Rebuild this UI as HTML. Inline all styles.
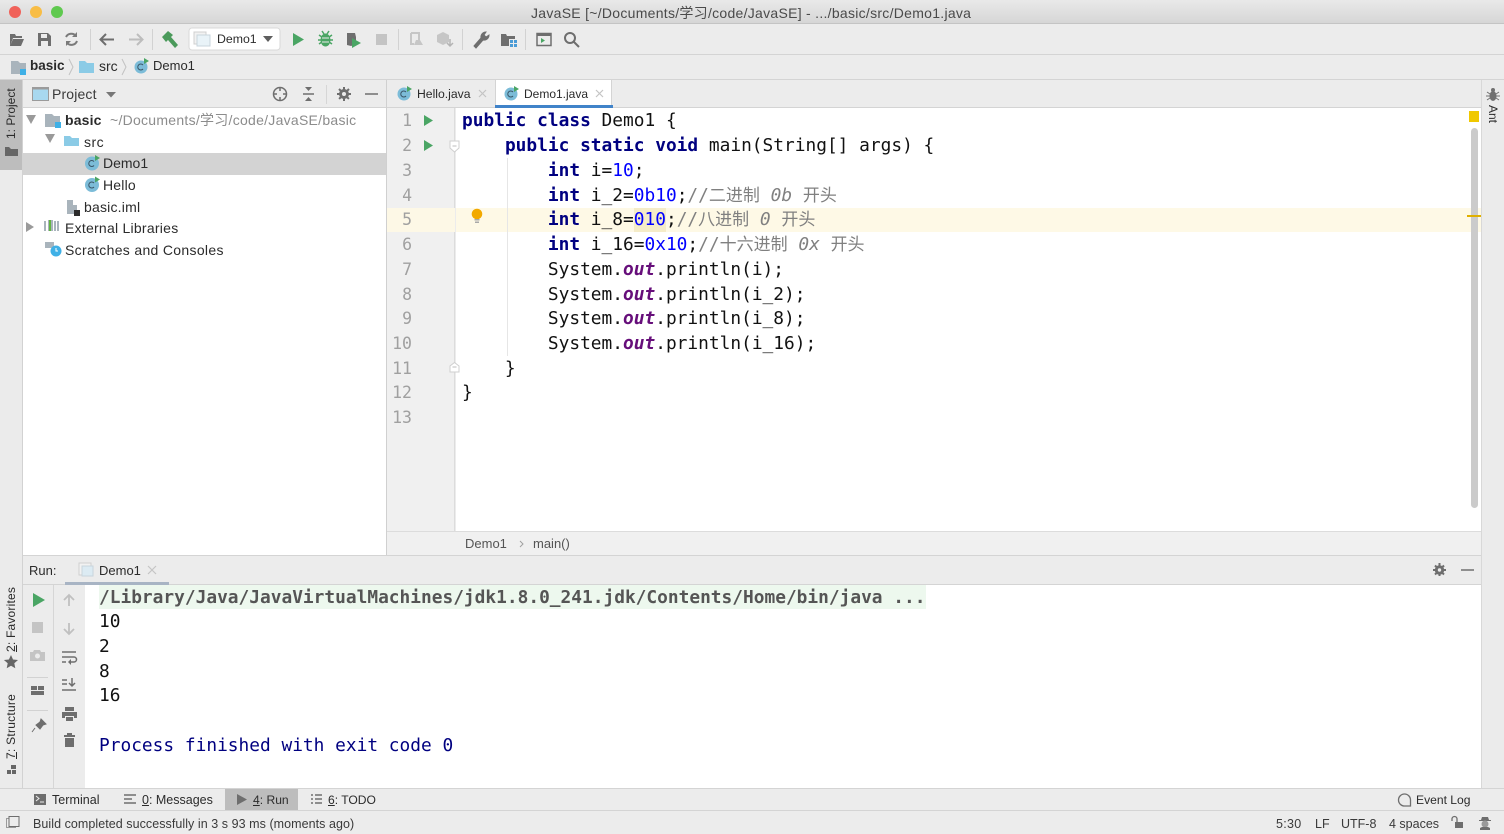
<!DOCTYPE html>
<html><head><meta charset="utf-8"><style>
html,body{margin:0;padding:0;width:1504px;height:834px;overflow:hidden;background:#ececec}
body{position:relative;font-family:"Liberation Sans","Noto Sans CJK SC",sans-serif;font-size:13px;color:#2b2b2b}
.a{position:absolute}
.t{position:absolute;white-space:nowrap;line-height:16px}
.m{position:absolute;white-space:pre;font-family:"DejaVu Sans Mono","Noto Sans CJK SC",monospace;font-size:17.83px;line-height:24px;color:#111}
.k{color:#000080;font-weight:bold}.n{color:#0000ff}.c{color:#808080}.z{font-size:17px}.ci{color:#808080;font-style:italic}.o{color:#660e7a;font-weight:bold;font-style:italic}
.ln{position:absolute;left:386px;width:26px;text-align:right;font-family:"DejaVu Sans Mono",monospace;font-size:16.5px;line-height:24px;color:#a0a0a0}
svg{position:absolute;overflow:visible}
u{text-decoration:underline}
</style></head><body>
<!-- title bar -->
<div class="a" style="left:0;top:0;width:1504px;height:24px;background:linear-gradient(#e9e9e9,#d6d6d6);border-bottom:1px solid #c4c4c4;box-sizing:border-box"></div>
<div class="a" style="left:9px;top:6px;width:12px;height:12px;border-radius:50%;background:#f0625a"></div>
<div class="a" style="left:30px;top:6px;width:12px;height:12px;border-radius:50%;background:#f8bd45"></div>
<div class="a" style="left:51px;top:6px;width:12px;height:12px;border-radius:50%;background:#5fc94f"></div>
<div class="t" style="left:531px;top:4.500px;font-size:14px;letter-spacing:.28px;color:#4a4a4a">JavaSE [~/Documents/学习/code/JavaSE] - .../basic/src/Demo1.java</div>
<!-- toolbar -->
<div class="a" style="left:0;top:24px;width:1504px;height:31px;background:#ececec;border-bottom:1px solid #d4d4d4;box-sizing:border-box"></div>
<svg style="left:0;top:24px" width="600" height="31">
<path d="M10 10h5l1 2h6v2H13l-3 8zM13 15h11l-3 7H10z" fill="#6e6e6e"/>
<path d="M38 9h10l3 3v10H38z" fill="#6e6e6e"/><rect x="41" y="10" width="6" height="4" fill="#ececec"/><rect x="41" y="17" width="7" height="5" fill="#ececec"/>
<path d="M76 12a6 6 0 0 0-10 1M67 19a6 6 0 0 0 10-2" fill="none" stroke="#7a7a7a" stroke-width="2"/><path d="M77 8v5h-5zM66 22v-5h5z" fill="#7a7a7a"/>
<rect x="90" y="5" width="1" height="21" fill="#d2d2d2"/>
<path d="M114 15.500H101M106 10l-5.500 5.500L106 21" fill="none" stroke="#6e6e6e" stroke-width="2"/>
<path d="M129 15.500h13M137 10l5.500 5.500L137 21" fill="none" stroke="#bdbdbd" stroke-width="2"/>
<rect x="152" y="5" width="1" height="21" fill="#d2d2d2"/>
<path d="M162 13l6-6 5 4-2 2 7 8-3 3-7-8-2 2z" fill="#4b9a5b"/>
<rect x="189" y="4" width="91" height="22" rx="3" fill="#fff" stroke="#d9d9d9"/>
<rect x="194" y="8" width="12" height="12" fill="#f2f2f2" stroke="#d0d0d0"/><rect x="197" y="11" width="13" height="11" fill="#e9f3f8" stroke="#c9d5dc"/>
<path d="M263 12h10l-5 6z" fill="#5e5e5e"/>
<path d="M293 9l11 6.500-11 6.500z" fill="#4aa564"/>
<ellipse cx="325.500" cy="16" rx="5" ry="6.500" fill="#4aa564"/><path d="M319 11l13 9M332 11l-13 9M318 16h15M322 7l2 3M329 7l-2 3" stroke="#4aa564" stroke-width="1.500"/><path d="M322 14h7M322 18h7" stroke="#ececec"/>
<path d="M347 9h8l1 4v3l-2 5-3 1-4-1z" fill="#6e6e6e"/><path d="M352 14l9 5-9 5z" fill="#4aa564"/>
<rect x="376" y="10" width="11" height="11" fill="#c4c4c4"/>
<rect x="398" y="5" width="1" height="21" fill="#d2d2d2"/>
<path d="M411 9h8v6h-1M411 9v11h3" fill="none" stroke="#c6c6c6" stroke-width="2"/><path d="M416 16l4 0 3 5h-9z" fill="#c6c6c6"/>
<path d="M437 11l6-3 6 3v7l-6 3-6-3z" fill="#c6c6c6"/><path d="M450 15v6M447 19l3 3 3-3" stroke="#b4b4b4" stroke-width="1.500" fill="none"/>
<rect x="462" y="5" width="1" height="21" fill="#d2d2d2"/>
<path d="M474 22l7-8a5 5 0 0 1 5-6l-2 3 2 2 3-2a5 5 0 0 1-6 5l-7 8z" fill="#6e6e6e" stroke="#6e6e6e"/>
<path d="M501 10h5l1 2h8v3h-6v7h-8z" fill="#6e6e6e"/><rect x="510" y="16" width="3" height="3" fill="#4a9bd6"/><rect x="514" y="16" width="3" height="3" fill="#4a9bd6"/><rect x="510" y="20" width="3" height="3" fill="#4a9bd6"/><rect x="514" y="20" width="3" height="3" fill="#4a9bd6"/>
<rect x="525" y="5" width="1" height="21" fill="#d2d2d2"/>
<rect x="537" y="9.500" width="14" height="12" fill="none" stroke="#6e6e6e" stroke-width="1.500"/><rect x="537" y="9" width="14" height="3" fill="#6e6e6e"/><path d="M541 14l4 2.500-4 2.500z" fill="#4aa564"/>
<circle cx="570" cy="14" r="5" fill="none" stroke="#6e6e6e" stroke-width="2"/><path d="M574 18l5 5" stroke="#6e6e6e" stroke-width="2"/>
</svg>
<div class="t" style="left:217px;top:31px;font-size:12.300px">Demo1</div>
<!-- nav bar -->
<div class="a" style="left:0;top:55px;width:1504px;height:25px;background:#ececec;border-bottom:1px solid #d4d4d4;box-sizing:border-box"></div>
<svg style="left:0;top:55px" width="200" height="25">
<path d="M11 6h7l2 2h6v11H11z" fill="#a9b4bc"/><rect x="20" y="14" width="6" height="6" fill="#3fb0e6"/>
<path d="M69 4l4 8-4 8M122 4l4 8-4 8" fill="none" stroke="#c2c2c2"/>
<path d="M79 6h6l2 2h7v10H79z" fill="#8bcbe6"/>
<circle cx="141" cy="12" r="6.500" fill="#7cbcd8"/><path d="M143 10a3 3 0 1 0 0 4" fill="none" stroke="#3a5566"/><path d="M144 3l5 3-5 3z" fill="#4aa564"/>
</svg>
<div class="t" style="left:30px;top:58px;font-weight:bold;font-size:13.500px">basic</div>
<div class="t" style="left:99px;top:58px;font-size:14px">src</div>
<div class="t" style="left:153px;top:58px">Demo1</div>
<!-- left stripe -->
<div class="a" style="left:0;top:80px;width:23px;height:708px;background:#ebebeb;border-right:1px solid #d2d2d2;box-sizing:border-box"></div>
<div class="a" style="left:0;top:80px;width:22px;height:90px;background:#bdbdbd"></div>
<div class="t" style="left:4px;top:139px;font-size:12px;transform-origin:0 0;transform:rotate(-90deg);line-height:15px">1: Project</div>
<svg style="left:0;top:140px" width="22" height="20"><path d="M5 7h4l2 2h7v7H5z" fill="#666"/></svg>
<div class="t" style="left:4px;top:652px;font-size:12px;letter-spacing:.2px;transform-origin:0 0;transform:rotate(-90deg);line-height:15px"><u>2</u>: Favorites</div>
<svg style="left:0;top:652px" width="22" height="20"><path d="M11 3l2 4.500 5 .5-3.700 3.300 1 5-4.300-2.600-4.300 2.600 1-5L3.900 8l5-.5z" fill="#666"/></svg>
<div class="t" style="left:4px;top:759px;font-size:12px;letter-spacing:.25px;transform-origin:0 0;transform:rotate(-90deg);line-height:15px"><u>7</u>: Structure</div>
<svg style="left:0;top:762px" width="22" height="16"><path d="M11 3h5v4h-5zM7 8h4v4H7zM12 8h4v4h-4z" fill="#666"/></svg>
<!-- right stripe -->
<div class="a" style="left:1481px;top:80px;width:23px;height:708px;background:#ebebeb;border-left:1px solid #d8d8d8;box-sizing:border-box"></div>
<svg style="left:1485px;top:87px" width="16" height="16"><ellipse cx="8" cy="9" rx="3.500" ry="5" fill="#707070"/><circle cx="8" cy="3" r="2" fill="#707070"/><path d="M2 5l12 8M14 5L2 13M1 9h14" stroke="#707070"/></svg>
<div class="t" style="left:1500px;top:105px;font-size:12px;transform-origin:0 0;transform:rotate(90deg);line-height:15px">Ant</div>
<!-- project panel -->
<div class="a" style="left:23px;top:80px;width:363px;height:28px;background:#ececec;border-bottom:1px solid #d4d4d4;box-sizing:border-box"></div>
<div class="a" style="left:23px;top:108px;width:363px;height:447px;background:#fff"></div>
<div class="a" style="left:386px;top:80px;width:1px;height:475px;background:#d0d0d0"></div>
<svg style="left:22px;top:80px" width="364" height="28">
<rect x="10.500" y="7.500" width="16" height="13" fill="#a8d8ef" stroke="#9b9b9b"/><rect x="10" y="7" width="17" height="2.500" fill="#9b9b9b"/>
<path d="M84 12h10l-5 5.500z" fill="#777"/>
<circle cx="258" cy="14" r="6.500" fill="none" stroke="#6e6e6e" stroke-width="1.500"/><path d="M258 7v4M258 17v4M251 14h4M261 14h4" stroke="#6e6e6e" stroke-width="1.500"/>
<path d="M281 14h11" stroke="#6e6e6e" stroke-width="1.500"/><path d="M283 7h7l-3.500 4zM283 21h7l-3.500-4z" fill="#6e6e6e"/>
<rect x="304" y="5" width="1" height="19" fill="#d6d6d6"/>
<circle cx="322" cy="14" r="3.500" fill="none" stroke="#6e6e6e" stroke-width="3"/><path d="M322 7v14M315 14h14M317 9l10 10M327 9l-10 10" stroke="#6e6e6e" stroke-width="2" stroke-dasharray="2.500 9"/>
<path d="M343 14h13" stroke="#6e6e6e" stroke-width="1.500"/>
</svg>
<div class="t" style="left:52px;top:86px;font-size:14px;letter-spacing:.15px;color:#3a3a3a">Project</div>
<div class="a" style="left:23px;top:153px;width:363px;height:22px;background:#d3d3d3"></div>
<svg style="left:22px;top:108px" width="220" height="155">
<path d="M4 7h10l-5 9z" fill="#9a9a9a"/><path d="M23 26h10l-5 9z" fill="#9a9a9a"/><path d="M4 114l8 5-8 5z" fill="#9a9a9a"/>
<path d="M23 6h7l2 2h6v11H23z" fill="#a9b4bc"/><rect x="33" y="14" width="6" height="6" fill="#3fb0e6"/>
<path d="M42 28h6l2 2h7v8H42z" fill="#8bcbe6"/>
<circle cx="70" cy="55.500" r="7" fill="#7cbcd8"/><path d="M72 53.500a3 3 0 1 0 0 4" fill="none" stroke="#3a5566"/><path d="M73 47l5 3-5 3z" fill="#4aa564"/>
<circle cx="70" cy="77" r="7" fill="#7cbcd8"/><path d="M72 75a3 3 0 1 0 0 4" fill="none" stroke="#3a5566"/><path d="M73 68.500l5 3-5 3z" fill="#4aa564"/>
<path d="M45 92h6v5h4v9H45z" fill="#a9b4bc"/><rect x="52" y="102" width="6" height="6" fill="#2b2b2b"/>
<path d="M23 113v10M27 112v11M30 112v11M33 113v10M36 113v10" stroke="#a9b4bc" stroke-width="2"/><path d="M28 112v11" stroke="#62b543" stroke-width="2"/>
<path d="M23 134h9v6h-9z" fill="#a9b4bc"/><circle cx="34" cy="143" r="5.500" fill="#3fb0e6"/><path d="M34 140v3h2" stroke="#fff" fill="none"/>
</svg>
<div class="t" style="left:65px;top:112px;font-weight:bold;font-size:14px;letter-spacing:.15px">basic</div>
<div class="t" style="left:110px;top:112px;font-size:14px;letter-spacing:.27px;color:#8c8c8c">~/Documents/学习/code/JavaSE/basic</div>
<div class="t" style="left:84px;top:134px;font-size:14px;letter-spacing:.5px">src</div>
<div class="t" style="left:103px;top:155px;font-size:14px">Demo1</div>
<div class="t" style="left:103px;top:177px;font-size:14px;letter-spacing:.2px">Hello</div>
<div class="t" style="left:84px;top:198.500px;font-size:14px;letter-spacing:.2px">basic.iml</div>
<div class="t" style="left:65px;top:220px;font-size:14px;letter-spacing:.25px">External Libraries</div>
<div class="t" style="left:65px;top:241.500px;font-size:14px;letter-spacing:.32px">Scratches and Consoles</div>
<!-- tabs -->
<div class="a" style="left:387px;top:80px;width:1094px;height:28px;background:#ececec;border-bottom:1px solid #d4d4d4;box-sizing:border-box"></div>
<div class="a" style="left:495px;top:80px;width:117px;height:28px;background:#fff;border-left:1px solid #d4d4d4;border-right:1px solid #d4d4d4;box-sizing:border-box"></div>
<div class="a" style="left:495px;top:105px;width:118px;height:3px;background:#4083c9"></div>
<svg style="left:390px;top:80px" width="230" height="28">
<circle cx="14" cy="14" r="6.500" fill="#7cbcd8"/><path d="M16 12a3 3 0 1 0 0 4" fill="none" stroke="#3a5566"/><path d="M17 6l5 3-5 3z" fill="#4aa564"/>
<path d="M89 10l7 7M96 10l-7 7M206 10l7 7M213 10l-7 7" stroke="#c4c4c4" stroke-width="1.200"/>
<circle cx="121" cy="14" r="6.500" fill="#7cbcd8"/><path d="M123 12a3 3 0 1 0 0 4" fill="none" stroke="#3a5566"/><path d="M124 6l5 3-5 3z" fill="#4aa564"/>
</svg>
<div class="t" style="left:417px;top:86px;font-size:12.200px">Hello.java</div>
<div class="t" style="left:524px;top:86px;font-size:12px">Demo1.java</div>
<!-- editor -->
<div class="a" style="left:387px;top:108px;width:68px;height:423px;background:#f0f0f0;border-right:1px solid #dcdcdc;box-sizing:border-box"></div>
<div class="a" style="left:456px;top:108px;width:1025px;height:423px;background:#fff"></div>
<div class="a" style="left:387px;top:208px;width:68px;height:24px;background:#fdf8e6"></div>
<div class="a" style="left:456px;top:208px;width:1025px;height:24px;background:#fef9e6"></div>
<div class="a" style="left:634px;top:208px;width:32px;height:24px;background:#f5ecc8"></div>
<div class="a" style="left:507px;top:158px;width:1px;height:198px;background:#e6e6e6"></div>
<div class="ln" style="top:109px">1</div><div class="ln" style="top:134px">2</div><div class="ln" style="top:159px">3</div><div class="ln" style="top:184px">4</div><div class="ln" style="top:208px">5</div><div class="ln" style="top:233px">6</div><div class="ln" style="top:258px">7</div><div class="ln" style="top:283px">8</div><div class="ln" style="top:307px">9</div><div class="ln" style="top:332px">10</div><div class="ln" style="top:357px">11</div><div class="ln" style="top:381px">12</div><div class="ln" style="top:406px">13</div>
<svg style="left:420px;top:108px" width="80" height="280">
<path d="M4 7l9 5.500-9 5.500zM4 32l9 5.500-9 5.500z" fill="#4aa564"/>
<path d="M30 33h9v7l-4.500 4-4.500-4z" fill="#fff" stroke="#cfcfcf"/><path d="M32.500 38h4" stroke="#bdbdbd"/>
<path d="M30 264l0-6 4.500-3.500 4.500 3.500v6z" fill="#fff" stroke="#cfcfcf"/><path d="M32.500 259h4" stroke="#bdbdbd"/>
</svg>
<svg style="left:470px;top:208px" width="16" height="18"><circle cx="7" cy="6" r="5.300" fill="#f2a900"/><path d="M4.500 11h5v1.500h-5zM5 13.500h4V15H5z" fill="#a8a8a8"/></svg>
<div class="m" style="left:462px;top:109px"><span class="k">public class</span> Demo1 {</div>
<div class="m" style="left:462px;top:134px">    <span class="k">public static void</span> main(String[] args) {</div>
<div class="m" style="left:462px;top:159px">        <span class="k">int</span> i=<span class="n">10</span>;</div>
<div class="m" style="left:462px;top:184px">        <span class="k">int</span> i_2=<span class="n">0b10</span>;<span class="c">//<span class="z">二进制</span> </span><span class="ci">0b</span><span class="c"> <span class="z">开头</span></span></div>
<div class="m" style="left:462px;top:208px">        <span class="k">int</span> i_8=<span class="n">010</span>;<span class="c">//<span class="z">八进制</span> </span><span class="ci">0</span><span class="c"> <span class="z">开头</span></span></div>
<div class="m" style="left:462px;top:233px">        <span class="k">int</span> i_16=<span class="n">0x10</span>;<span class="c">//<span class="z">十六进制</span> </span><span class="ci">0x</span><span class="c"> <span class="z">开头</span></span></div>
<div class="m" style="left:462px;top:258px">        System.<span class="o">out</span>.println(i);</div>
<div class="m" style="left:462px;top:283px">        System.<span class="o">out</span>.println(i_2);</div>
<div class="m" style="left:462px;top:307px">        System.<span class="o">out</span>.println(i_8);</div>
<div class="m" style="left:462px;top:332px">        System.<span class="o">out</span>.println(i_16);</div>
<div class="m" style="left:462px;top:357px">    }</div>
<div class="m" style="left:462px;top:381px">}</div>
<div class="a" style="left:1469px;top:111px;width:10px;height:11px;background:#f0c800"></div>
<div class="a" style="left:1471px;top:128px;width:7px;height:380px;border-radius:4px;background:#cbcbcb"></div>
<div class="a" style="left:1467px;top:215px;width:14px;height:2px;background:#e0b000"></div>
<!-- editor breadcrumb -->
<div class="a" style="left:387px;top:531px;width:1094px;height:24px;background:#f0f0f0;border-top:1px solid #dcdcdc;box-sizing:border-box"></div>
<div class="t" style="left:465px;top:536px;color:#555">Demo1</div>
<svg style="left:518px;top:538px" width="8" height="12"><path d="M2 3l3 3-3 3" fill="none" stroke="#a0a0a0"/></svg>
<div class="t" style="left:533px;top:536px;color:#555">main()</div>
<!-- run panel -->
<div class="a" style="left:23px;top:555px;width:1458px;height:30px;background:#ececec;border-top:1px solid #d4d4d4;border-bottom:1px solid #d4d4d4;box-sizing:border-box"></div>
<div class="t" style="left:29px;top:563px">Run:</div>
<div class="a" style="left:65px;top:582px;width:104px;height:3px;background:#a8b4c4"></div>
<svg style="left:78px;top:561px" width="90" height="20">
<rect x="1" y="2" width="12" height="12" fill="#f2f2f2" stroke="#d0d0d0"/><rect x="4" y="5" width="11" height="10" fill="#dcebf3" stroke="#c9d5dc"/>
<path d="M70 5l8 8M78 5l-8 8" stroke="#c4c4c4" stroke-width="1.200"/>
</svg>
<div class="t" style="left:99px;top:563px">Demo1</div>
<svg style="left:1430px;top:560px" width="50" height="20">
<circle cx="9.500" cy="10" r="3.200" fill="none" stroke="#6e6e6e" stroke-width="3"/><path d="M9.500 3v14M3 10h13M5 5.500l9 9M14 5.500l-9 9" stroke="#6e6e6e" stroke-width="2" stroke-dasharray="2.500 8"/>
<path d="M31 10h13" stroke="#6e6e6e" stroke-width="1.500"/>
</svg>
<div class="a" style="left:23px;top:585px;width:62px;height:203px;background:#ececec"></div>
<div class="a" style="left:53px;top:585px;width:1px;height:203px;background:#d6d6d6"></div>
<div class="a" style="left:85px;top:585px;width:1396px;height:203px;background:#fff"></div>
<svg style="left:22px;top:585px" width="64" height="200">
<path d="M11 8l12 7-12 7z" fill="#4aa564"/>
<rect x="10" y="37" width="11" height="11" fill="#c4c4c4"/>
<path d="M8 67h3l1-2h6l1 2h4v9H8z" fill="#c4c4c4"/><circle cx="15.500" cy="71" r="2.500" fill="#ececec"/>
<rect x="5" y="92" width="21" height="1" fill="#d2d2d2"/>
<path d="M9 101h6v4H9zM16 101h6v4h-6zM9 106h13v4H9z" fill="#6e6e6e"/>
<rect x="5" y="125" width="21" height="1" fill="#d2d2d2"/>
<path d="M19 134l5 5-3 1-3 4-4-4 4-3zM13 143l-3 4" fill="#6e6e6e" stroke="#6e6e6e"/>
<path d="M47 21V10M42 15l5-5 5 5" fill="none" stroke="#c0c0c0" stroke-width="1.800"/>
<path d="M47 38v11M42 44l5 5 5-5" fill="none" stroke="#c0c0c0" stroke-width="1.800"/>
<path d="M40 67h14M40 72h12a2.500 2.500 0 0 1 0 5h-4M40 77h4" fill="none" stroke="#6e6e6e" stroke-width="1.500"/><path d="M49 74l-3 3 3 3z" fill="#6e6e6e"/>
<path d="M40 95h5M40 99h5M40 105h14M50 93v8M47 98l3 3 3-3" fill="none" stroke="#6e6e6e" stroke-width="1.500"/>
<path d="M43 122h9v4h-9zM40 127h15v6h-3v-2h-9v2h-3zM44 132h7v4h-7z" fill="#6e6e6e"/>
<path d="M42 150h11v2H42zM45 148h5v2h-5zM43 153h9v9h-9z" fill="#6e6e6e"/>
</svg>
<div class="a" style="left:99px;top:585px;width:827px;height:24px;background:#edf8ee"></div>
<div class="m" style="left:99px;top:586px;font-weight:bold;color:#555">/Library/Java/JavaVirtualMachines/jdk1.8.0_241.jdk/Contents/Home/bin/java ...</div>
<div class="m" style="left:99px;top:610px">10</div>
<div class="m" style="left:99px;top:635px">2</div>
<div class="m" style="left:99px;top:660px">8</div>
<div class="m" style="left:99px;top:684px">16</div>
<div class="m" style="left:99px;top:734px;color:#000080">Process finished with exit code 0</div>
<!-- bottom tool bar -->
<div class="a" style="left:0;top:788px;width:1504px;height:23px;background:#ececec;border-top:1px solid #d4d4d4;border-bottom:1px solid #d4d4d4;box-sizing:border-box"></div>
<div class="a" style="left:225px;top:789px;width:73px;height:21px;background:#bdbdbd"></div>
<svg style="left:0;top:789px" width="340" height="21">
<rect x="34" y="5" width="12" height="11" fill="#6e6e6e"/><path d="M36 7l3 2.500-3 2.500M40 13h4" fill="none" stroke="#ececec"/>
<path d="M124 6h12M124 10h8M124 14h12" stroke="#6e6e6e" stroke-width="1.500"/>
<path d="M237 5l10 5.500-10 5.500z" fill="#6e6e6e"/>
<path d="M311 6h2M311 10h2M311 14h2M315 6h7M315 10h7M315 14h7" stroke="#6e6e6e" stroke-width="1.500"/>
</svg>
<div class="t" style="left:52px;top:792px;font-size:12.500px;letter-spacing:.05px">Terminal</div>
<div class="t" style="left:142px;top:792px;font-size:12.500px"><u>0</u>: Messages</div>
<div class="t" style="left:253px;top:792px;font-size:12.100px"><u>4</u>: Run</div>
<div class="t" style="left:328px;top:792px;font-size:12.100px"><u>6</u>: TODO</div>
<svg style="left:1396px;top:792px" width="18" height="16"><path d="M8.500 2a6 6 0 1 0 0 12h6V8a6 6 0 0 0-6-6z" fill="none" stroke="#6e6e6e" stroke-width="1.300"/></svg>
<div class="t" style="left:1416px;top:792px;font-size:12.100px">Event Log</div>
<!-- status bar -->
<div class="a" style="left:0;top:811px;width:1504px;height:23px;background:#ececec"></div>
<svg style="left:5px;top:815px" width="16" height="16"><rect x="1.500" y="3.500" width="9" height="9" fill="none" stroke="#9a9a9a"/><rect x="4" y="1.500" width="10" height="10" fill="#ececec" stroke="#6e6e6e"/></svg>
<div class="t" style="left:33px;top:816px;font-size:12.500px;letter-spacing:.055px;color:#3a3a3a">Build completed successfully in 3 s 93 ms (moments ago)</div>
<div class="t" style="left:1276px;top:816px;font-size:12.500px;letter-spacing:.3px;color:#3a3a3a">5:30</div>
<div class="t" style="left:1315px;top:816px;font-size:12.500px;color:#3a3a3a">LF</div>
<div class="t" style="left:1341px;top:816px;font-size:12.500px;color:#3a3a3a">UTF-8</div>
<div class="t" style="left:1389px;top:816px;font-size:12.500px;color:#3a3a3a">4 spaces</div>
<svg style="left:1450px;top:815px" width="40" height="16">
<path d="M2 6V4a2.500 2.500 0 0 1 5 0v3" fill="none" stroke="#6e6e6e" stroke-width="1.300"/><rect x="5" y="7" width="8" height="6" fill="#6e6e6e"/>
<path d="M31 5l1-3h6l1 3h2v1H29V5z" fill="#6e6e6e"/><circle cx="35" cy="9" r="3.500" fill="#9a9a9a"/><path d="M30 15h10v-2l-2-1h-6l-2 1z" fill="#6e6e6e"/>
</svg>
</body></html>
